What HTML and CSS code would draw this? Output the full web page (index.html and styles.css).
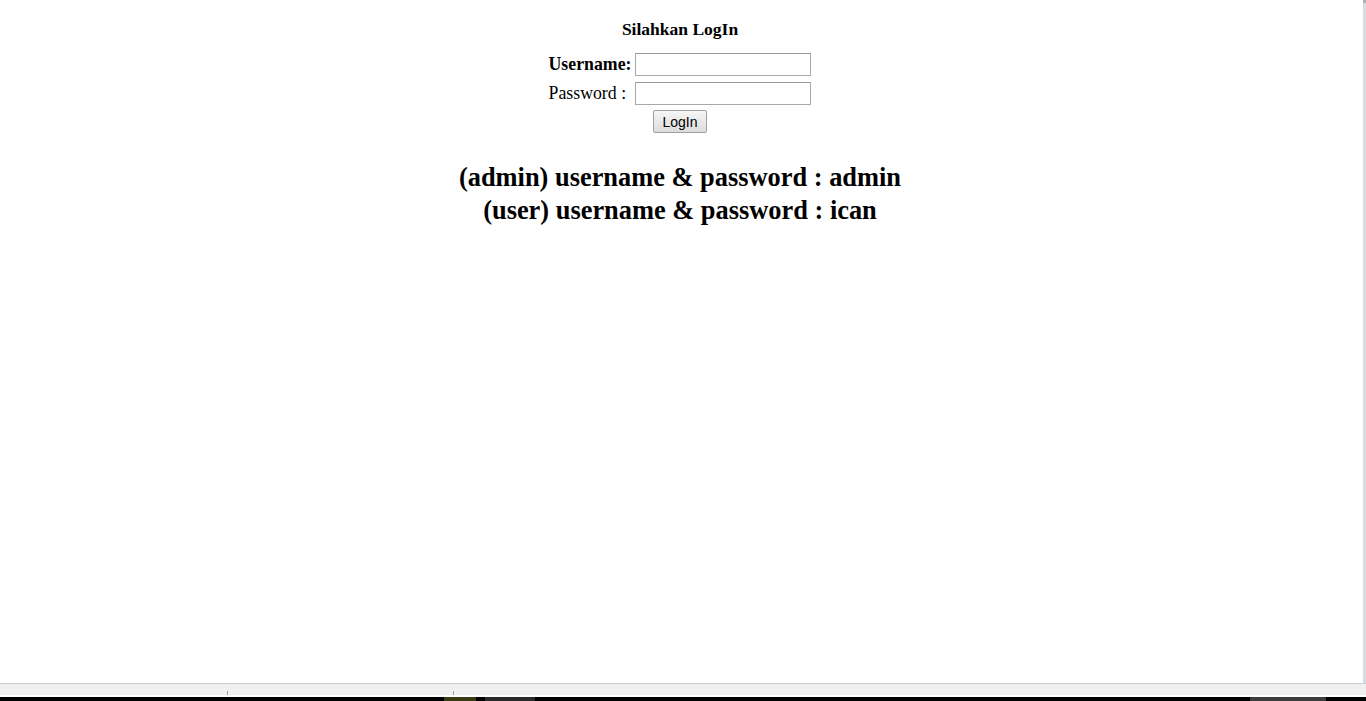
FILE: index.html
```html
<!DOCTYPE html>
<html>
<head>
<meta charset="utf-8">
<link rel="stylesheet" href="styles.css">
</head>
<body>
<div class="screen">
  <div class="viewport">
    <main class="page">
      <h3 class="title">Silahkan LogIn</h3>
      <form class="login">
        <label class="lbl bold" for="u">Username:</label>
        <input class="field" id="u" type="text">
        <label class="lbl" for="p">Password :</label>
        <input class="field" id="p" type="password">
        <div class="btnrow"><button type="button" class="btn">LogIn</button></div>
      </form>
      <div class="info">
        <div>(admin) username &amp; password : admin</div>
        <div>(user) username &amp; password : ican</div>
      </div>
    </main>
    <div class="scroll"></div>
  </div>
  <div class="statusbar">
    <div class="sb-line"></div>
    <div class="sb-body"><span class="tick t1"></span><span class="tick t2"></span></div>
    <div class="sb-white"></div>
    <div class="sb-black"><span class="task k1"></span><span class="task k2"></span><span class="task k3"></span></div>
  </div>
</div>
</body>
</html>
```
FILE: styles.css
```css
* { box-sizing: border-box; }
html, body { margin: 0; padding: 0; background: #fff; }
body { font-family: "Liberation Serif", "Times New Roman", serif; color: #000; }
.screen { width: 1366px; height: 701px; display: flex; flex-direction: column; overflow: hidden; }
.viewport { flex: 1; display: flex; min-height: 0; }
.page { flex: 1; display: flex; flex-direction: column; align-items: center; padding-top: 19px; padding-right: 3px; }
.scroll { width: 3px; background: #d5dce2; border-top: 3px solid #aab1b8; }
.title { margin: 0; font-size: 17.5px; font-weight: bold; line-height: 20px; }
.login { display: grid; grid-template-columns: auto auto; column-gap: 4px; row-gap: 6px; margin-top: 14px; align-items: center; font-size: 17.8px; }
.lbl { line-height: 23px; }
.bold { font-weight: bold; }
.field { width: 176px; height: 23px; border: 1px solid #a9a9a9; border-top-color: #999; padding: 1px 2px; font-size: 13px; margin: 0; background: #fff; }
.btnrow { grid-column: 1 / 3; display: flex; justify-content: center; margin-top: -1px; }
.btn { width: 54px; height: 23px; font-family: "Liberation Sans", Arial, sans-serif; font-size: 14px; padding: 0; border: 1px solid #a0a0a0; border-radius: 2px; background: linear-gradient(#f6f6f6, #dcdcdc); color: #000; }
.info { margin-top: 28px; font-size: 26.4px; font-weight: bold; line-height: 33px; text-align: center; }
.statusbar { height: 18px; display: flex; flex-direction: column; }
.sb-line { height: 1px; background: #cdcdcd; }
.sb-body { height: 11px; background: #f0f0f0; position: relative; }
.tick { position: absolute; top: 7px; width: 1px; height: 4px; background: #a0a0a0; }
.t1 { left: 227px; } .t2 { left: 453px; }
.sb-white { height: 2px; background: #fff; }
.sb-black { flex: 1; background: #000; position: relative; }
.task { position: absolute; top: 0; height: 4px; }
.k1 { left: 444px; width: 32px; background: #3a3a10; }
.k2 { left: 485px; width: 50px; background: #2a2a2a; }
.k3 { left: 1250px; width: 76px; background: #3c3c3c; }
```
